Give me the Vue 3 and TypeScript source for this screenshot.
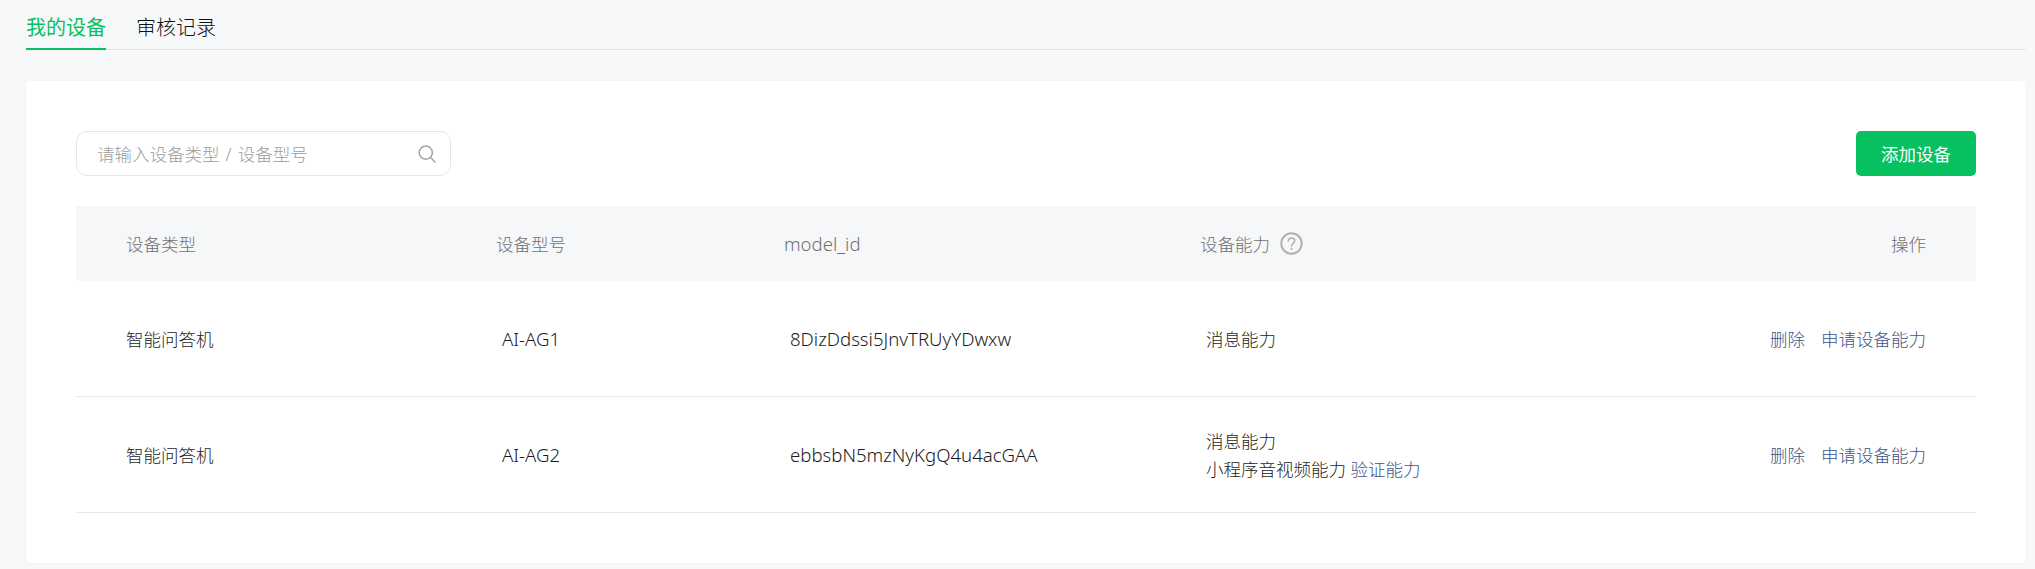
<script setup lang="ts">
interface Capability { name: string; verify?: boolean }
interface Device { type: string; model: string; id: string; caps: Capability[] }

const devices: Device[] = [
  { type: '智能问答机', model: 'AI-AG1', id: '8DizDdssi5JnvTRUyYDwxw', caps: [{ name: '消息能力' }] },
  {
    type: '智能问答机',
    model: 'AI-AG2',
    id: 'ebbsbN5mzNyKgQ4u4acGAA',
    caps: [{ name: '消息能力' }, { name: '小程序音视频能力', verify: true }],
  },
]
</script>

<template>
  <div class="page">
    <nav class="tabs">
      <a class="tab active">我的设备</a>
      <a class="tab">审核记录</a>
    </nav>
    <section class="card">
      <div class="toolbar">
        <label class="search">
          <input type="text" placeholder="请输入设备类型 / 设备型号" />
          <svg width="18" height="18" viewBox="0 0 18 18" fill="none" stroke="#a3a3a3" stroke-width="1.5">
            <circle cx="7.8" cy="7.6" r="6.6" />
            <path d="M12.6 12.4 L17 17" stroke-linecap="round" />
          </svg>
        </label>
        <button class="add" type="button">添加设备</button>
      </div>
      <table class="table">
        <colgroup>
          <col class="c1" />
          <col class="c2" />
          <col class="c3" />
          <col class="c4" />
          <col />
        </colgroup>
        <thead>
          <tr>
            <th>设备类型</th>
            <th>设备型号</th>
            <th class="latin">model_id</th>
            <th>
              <span class="cap-head">
                设备能力
                <svg width="23" height="23" viewBox="0 0 23 23" fill="none">
                  <circle cx="11.5" cy="11.5" r="10.2" stroke="#b2b2b2" stroke-width="2" />
                  <path d="M8.3 9.1 C8.3 7.2 9.7 6 11.5 6 C13.3 6 14.7 7.2 14.7 8.9 C14.7 11.1 11.6 11.3 11.6 13.9" stroke="#b2b2b2" stroke-width="1.6" stroke-linecap="round" />
                  <circle cx="11.6" cy="16.8" r="1.1" fill="#b2b2b2" />
                </svg>
              </span>
            </th>
            <th class="right">操作</th>
          </tr>
        </thead>
        <tbody>
          <tr v-for="d in devices" :key="d.id">
            <td>{{ d.type }}</td>
            <td class="inset latin">{{ d.model }}</td>
            <td class="inset latin">{{ d.id }}</td>
            <td class="inset caps">
              <div v-for="c in d.caps" :key="c.name" class="cap">
                {{ c.name }}
                <a v-if="c.verify" class="link">验证能力</a>
              </div>
            </td>
            <td class="right">
              <a class="link">删除</a>
              <a class="link second">申请设备能力</a>
            </td>
          </tr>
        </tbody>
      </table>
    </section>
  </div>
</template>

<style>
html,
body {
  margin: 0;
  background: #f7f8fa;
}
</style>

<style scoped>
.page {
  box-sizing: border-box;
  height: 569px;
  overflow: hidden;
  padding: 0 9px 6px 26px;
  font-family: "Noto Sans", "Noto Sans CJK SC", sans-serif;
  font-size: 17.5px;
  font-weight: 300;
  color: #1c1c1c;
}
.tabs {
  display: flex;
  gap: 30px;
  height: 50px;
  box-sizing: border-box;
  border-bottom: 1px solid #e3e4e6;
}
.tab {
  box-sizing: border-box;
  height: 50px;
  padding-top: 13px;
  font-size: 20px;
  line-height: 30px;
  color: #111;
}
.tab.active {
  color: #07c160;
  font-weight: 400;
  border-bottom: 2px solid #07c160;
}
.card {
  margin-top: 31px;
  padding: 50px;
  background: #fff;
  border-radius: 4px;
  box-shadow: 0 1px 4px rgba(0, 0, 0, 0.03);
}
.toolbar {
  display: flex;
  justify-content: space-between;
  align-items: center;
}
.search {
  box-sizing: border-box;
  display: flex;
  align-items: center;
  width: 375px;
  height: 45px;
  padding: 0 14px 0 20px;
  border: 1px solid #e5e5e5;
  border-radius: 11px;
}
.search input {
  flex: 1;
  min-width: 0;
  padding: 0;
  border: 0;
  outline: 0;
  background: transparent;
  font: inherit;
  word-spacing: 1.5px;
  color: #353535;
}
.search input::placeholder {
  color: #9c9c9c;
  opacity: 1;
}
.add {
  width: 120px;
  height: 45px;
  padding: 0;
  border: 0;
  border-radius: 5px;
  background: #07c160;
  color: #fff;
  font: inherit;
  font-weight: 400;
}
.table {
  width: 100%;
  margin-top: 30px;
  border-collapse: collapse;
  table-layout: fixed;
}
.c1 {
  width: 420px;
}
.c2 {
  width: 288px;
}
.c3 {
  width: 416px;
}
.c4 {
  width: 400px;
}
th {
  height: 75px;
  padding: 0;
  background: #f6f7f9;
  font-weight: 300;
  color: #707070;
  text-align: left;
}
th:first-child,
td:first-child {
  padding-left: 50px;
}
th.latin,
td.latin {
  font-size: 18.6px;
}
.cap-head {
  display: inline-flex;
  align-items: center;
  gap: 10px;
}
td {
  height: 115px;
  padding: 0;
  border-bottom: 1px solid #e6e7ea;
}
td.inset {
  padding-left: 6px;
}
td.caps {
  padding-top: 2px;
  height: 113px;
}
.right {
  padding-right: 50px;
  text-align: right;
}
.cap {
  line-height: 27.5px;
}
.link {
  color: #405488;
}
.second {
  margin-left: 16px;
}
</style>
